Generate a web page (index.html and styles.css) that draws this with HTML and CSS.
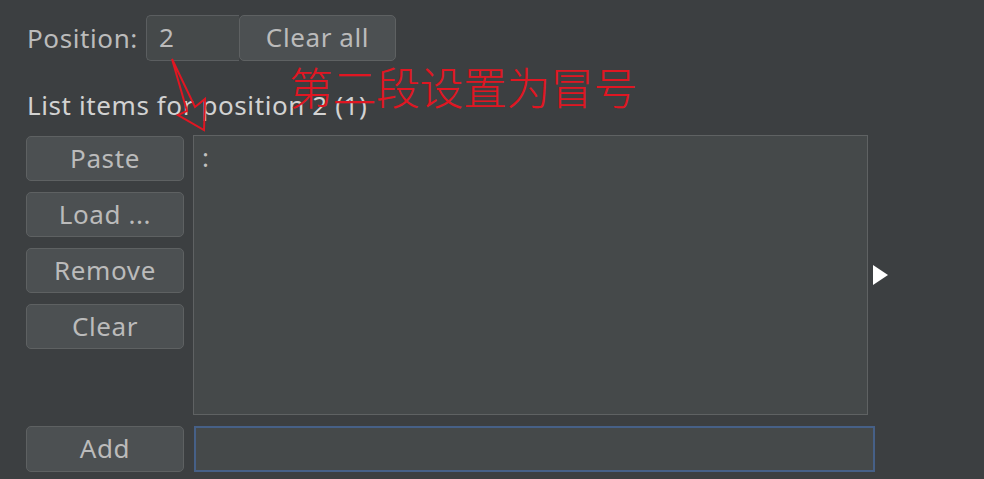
FILE: index.html
```html
<!DOCTYPE html>
<html lang="en">
<head>
  <meta charset="UTF-8" />
  <title>List items</title>
  <link rel="stylesheet" href="styles.css">
</head>
<body>
  <div class="panel">
    <div class="position-row">
      <span class="label">Position:</span>
      <div class="position-group">
        <input class="position-input" type="text" value="2">
        <button class="btn clear-all">Clear all</button>
      </div>
    </div>

    <div class="list-title">List items for position 2 (1)</div>

    <div class="list-row">
      <div class="side-buttons">
        <button class="btn">Paste</button>
        <button class="btn">Load ...</button>
        <button class="btn">Remove</button>
        <button class="btn">Clear</button>
      </div>
      <div class="item-list">
        <div class="item">:</div>
      </div>
      <span class="expander"></span>
    </div>

    <div class="add-row">
      <button class="btn">Add</button>
      <input class="add-input" type="text">
    </div>

    <!-- red note -->
    <svg class="note-arrow" width="60" height="90" viewBox="160 50 60 90">
      <polygon points="172,59 195,107 205,99 204,130 178,115 187,111" fill="none" stroke="#e01622" stroke-width="2" stroke-linejoin="miter"/>
    </svg>
    <div class="note-text">第二段设置为冒号</div>
  </div>
</body>
</html>
```

FILE: styles.css
```css
body {
  margin: 0;
  background-color: #3c3f41;
  font-family: 'Noto Sans', 'Noto Sans CJK SC', sans-serif;
  color: #bbbbbb;
  font-size: 26px;
  letter-spacing: 0.6px;
}

.panel {
  position: relative;
  width: 984px;
  height: 479px;
  padding: 15px 0 0 26px;
  box-sizing: border-box;
}

.position-row {
  display: flex;
  align-items: center;
  height: 46px;
}

.label {
  width: 119px;
  padding-left: 1px;
}

.position-group {
  display: flex;
  height: 46px;
}

.position-input {
  width: 93px;
  height: 46px;
  box-sizing: border-box;
  background-color: #45494a;
  border: 1px solid #5b5e60;
  border-right: none;
  border-radius: 5px 0 0 5px;
  color: #bbbbbb;
  font: inherit;
  padding: 0 0 2px 12px;
  outline: none;
}

.btn {
  background-color: #4c5052;
  border: 1px solid #5e6162;
  border-radius: 5px;
  color: #bbbbbb;
  font: inherit;
  letter-spacing: 0.6px;
  height: 45px;
  padding: 0 0 2px 0;
  cursor: pointer;
}

.clear-all {
  width: 157px;
  height: 46px;
}

.list-title {
  margin-top: 29px;
  padding-left: 1px;
  height: 30px;
  line-height: 30px;
  color: #d2d2d2;
}

.list-row {
  display: flex;
  align-items: flex-start;
  margin-top: 15px;
}

.side-buttons {
  display: flex;
  flex-direction: column;
  gap: 11px;
  width: 158px;
  padding-top: 1px;
}

.item-list {
  width: 675px;
  height: 280px;
  margin-left: 9px;
  box-sizing: border-box;
  background-color: #45494a;
  border: 1px solid #5f6263;
  padding: 4px 0 0 8px;
}

.item {
  line-height: 34px;
  color: #c0c0c0;
}

.expander {
  align-self: center;
  margin: 0 0 0 5px;
  width: 0;
  height: 0;
  border-top: 10px solid transparent;
  border-bottom: 10px solid transparent;
  border-left: 15px solid #ffffff;
}

.add-row {
  display: flex;
  align-items: center;
  gap: 10px;
  margin-top: 11px;
}

.add-row .btn {
  width: 158px;
  height: 46px;
}

.add-input {
  width: 681px;
  height: 46px;
  box-sizing: border-box;
  background-color: #45494a;
  border: 2px solid #466087;
  outline: none;
}

.note-arrow {
  position: absolute;
  left: 160px;
  top: 50px;
}

.note-text {
  position: absolute;
  left: 289px;
  top: 58px;
  font-family: 'Noto Sans CJK SC', sans-serif;
  font-weight: 300;
  font-size: 44px;
  line-height: 56px;
  color: #e01622;
  letter-spacing: -0.5px;
}
```
